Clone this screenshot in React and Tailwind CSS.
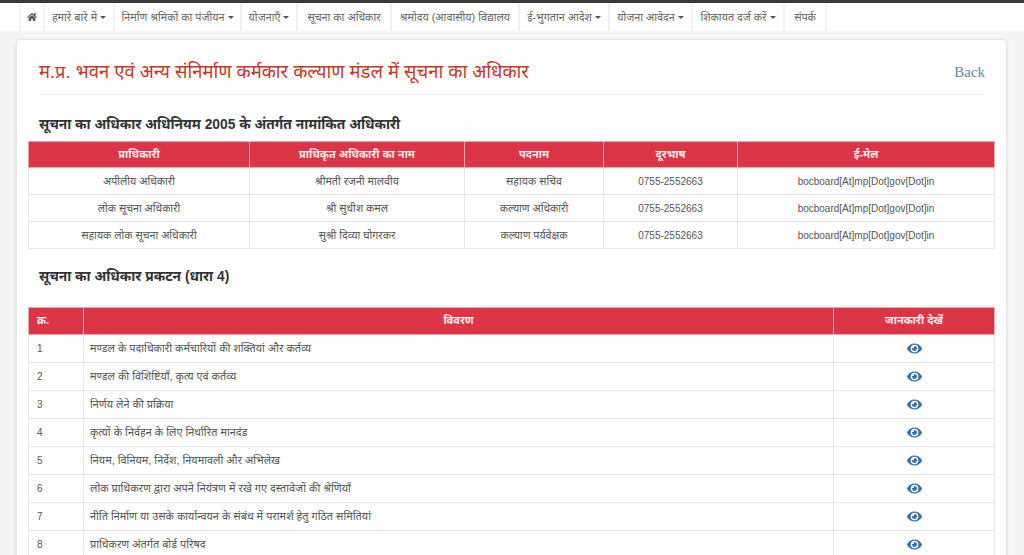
import { FaEye, FaHome } from 'react-icons/fa';

const devanagari = "font-['Liberation_Sans','Noto_Sans','Noto_Sans_Devanagari',sans-serif]";

const navItems = [
  { label: 'हमारे बारे मे', caret: true, width: 'w-[70px]' },
  { label: 'निर्माण श्रमिकों का पंजीयन', caret: true, width: 'w-[127px]' },
  { label: 'योजनाएँ', caret: true, width: 'w-[56px]' },
  { label: 'सूचना का अधिकार', width: 'w-[94px]' },
  { label: 'श्रमोदय (आवासीय) विद्यालय', width: 'w-[128px]' },
  { label: 'ई-भुगतान आदेश', caret: true, width: 'w-[90px]' },
  { label: 'योजना आवेदन', caret: true, width: 'w-[83px]' },
  { label: 'शिकायत दर्ज करें', caret: true, width: 'w-[92px]' },
  { label: 'संपर्क', width: 'w-[42px]' },
];

const officers = [
  ['अपीलीय अधिकारी', 'श्रीमती रजनी मालवीय', 'सहायक सचिव'],
  ['लोक सूचना अधिकारी', 'श्री सुधीश कमल', 'कल्याण अधिकारी'],
  ['सहायक लोक सूचना अधिकारी', 'सुश्री दिव्या घोगरकर', 'कल्याण पर्यवेक्षक'],
];

const disclosures = [
  'मण्डल के पदाधिकारी कर्मचारियों की शक्तियां और कर्तव्य',
  'मण्डल की विशिष्टियाँ, कृत्य एवं कर्तव्य',
  'निर्णय लेने की प्रक्रिया',
  'कृत्यों के निर्वहन के लिए निर्धारित मानदंड',
  'नियम, विनियम, निर्देश, नियमावली और अभिलेख',
  'लोक प्राधिकरण द्वारा अपने नियंत्रण में रखे गए दस्तावेजों की श्रेणियाँ',
  'नीति निर्माण या उसके कार्यान्वयन के संबंध में परामर्श हेतु गठित समितियां',
  'प्राधिकरण अंतर्गत बोर्ड परिषद',
];

function NavItem({ label, caret, width }) {
  return (
    <li className={`${width} flex items-center justify-center gap-[3px] border-r-2 border-[#f1f1f1] text-[10.8px] whitespace-nowrap text-[#666]`}>
      {label}
      {caret && <span className="mt-px border-x-[3px] border-t-[3px] border-x-transparent border-t-[#555]" />}
    </li>
  );
}

function Th({ children, className = '' }) {
  return <th className={`border border-[#e9aab2] bg-[#dc3545] px-2 text-[11px] font-bold text-[#fbe9eb] ${className}`}>{children}</th>;
}

function Td({ children, className = '' }) {
  return <td className={`border border-[#e6e6e6] px-2 text-[#555] ${className}`}>{children}</td>;
}

export default function App() {
  return (
    <div className={`h-[555px] overflow-hidden bg-[#f5f5f5] ${devanagari}`}>
      <div className="h-[3px] bg-[#3a3a3a]" />
      <ul className="flex h-[28px] bg-white pl-[19px]">
        <li className="flex w-[26px] items-center justify-center border-x-2 border-[#f1f1f1] text-[10px] text-[#555]">
          <FaHome />
        </li>
        {navItems.map((item) => <NavItem key={item.label} {...item} />)}
      </ul>

      <main className="mt-2 mr-[17px] ml-[16px] rounded-sm border border-[#e6e6e6] bg-white pt-[17px] pl-[11px] shadow-sm">
        <div className="mr-[21px] ml-[11px] flex h-[38px] items-start justify-between border-b border-[#eeeeee]">
          <h1 className="text-[18.4px] leading-[30px] text-[#c0392b]">
            म.प्र. भवन एवं अन्य संनिर्माण कर्मकार कल्याण मंडल में सूचना का अधिकार
          </h1>
          <a className="mt-[5px] font-['Liberation_Serif',serif] text-[15px] leading-5 text-[#5f8aa8]">Back</a>
        </div>

        <h2 className="mx-[11px] mt-[20px] text-[13.8px] leading-5 font-bold text-[#333]">
          सूचना का अधिकार अधिनियम 2005 के अंतर्गत नामांकित अधिकारी
        </h2>
        <table className="mt-[6px] w-[967px] table-fixed border-collapse text-center">
          <colgroup>
            <col className="w-[221px]" />
            <col className="w-[215px]" />
            <col className="w-[139px]" />
            <col className="w-[134px]" />
            <col />
          </colgroup>
          <thead>
            <tr className="h-[26px]">
              <Th>प्राधिकारी</Th>
              <Th>प्राधिकृत अधिकारी का नाम</Th>
              <Th>पदनाम</Th>
              <Th>दूरभाष</Th>
              <Th>ई-मेल</Th>
            </tr>
          </thead>
          <tbody>
            {officers.map(([role, name, post]) => (
              <tr key={role} className="h-[27px]">
                <Td className="text-[10.7px]">{role}</Td>
                <Td className="text-[10.7px]">{name}</Td>
                <Td className="text-[10.7px]">{post}</Td>
                <Td className="text-[10px]">0755-2552663</Td>
                <Td className="text-[10px]">bocboard[At]mp[Dot]gov[Dot]in</Td>
              </tr>
            ))}
          </tbody>
        </table>

        <h2 className="mx-[11px] mt-[18px] text-[13.8px] leading-5 font-bold text-[#333]">
          सूचना का अधिकार प्रकटन (धारा 4)
        </h2>
        <table className="mt-[20px] w-[967px] table-fixed border-collapse">
          <colgroup>
            <col className="w-[55px]" />
            <col />
            <col className="w-[161px]" />
          </colgroup>
          <thead>
            <tr className="h-[27px]">
              <Th className="pb-[2px] text-left">क्र.</Th>
              <Th className="pb-[2px]">विवरण</Th>
              <Th className="pb-[2px]">जानकारी देखें</Th>
            </tr>
          </thead>
          <tbody>
            {disclosures.map((text, i) => (
              <tr key={text} className="h-[28px]">
                <Td className="text-[10px]">{i + 1}</Td>
                <Td className="px-[6px] text-[10.9px]">{text}</Td>
                <Td>
                  <FaEye className="mx-auto text-[15px] text-[#3a76ad]" />
                </Td>
              </tr>
            ))}
          </tbody>
        </table>
      </main>
    </div>
  );
}
